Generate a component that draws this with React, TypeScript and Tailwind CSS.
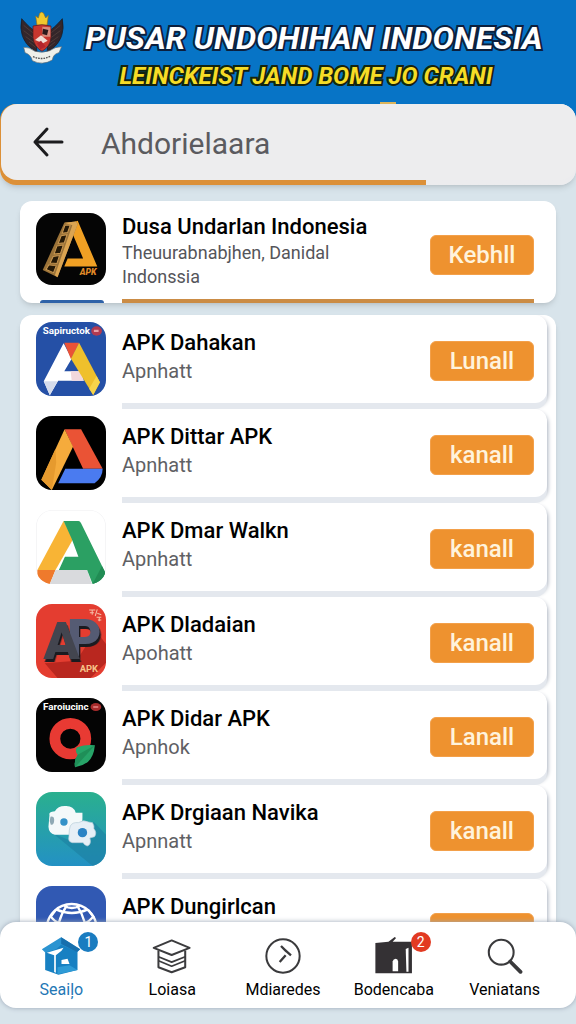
import { useState } from "react";
import type { ReactNode } from "react";

type AppItem = {
  id: number;
  name: string;
  desc: string;
  action?: string;
  icon: ReactNode;
};

const Tile = ({ children, bg }: { children: ReactNode; bg: string }) => (
  <svg viewBox="0 0 208 222" preserveAspectRatio="none" className="h-full w-full rounded-2xl" aria-hidden="true">
    <rect width="208" height="222" fill={bg} />
    {children}
  </svg>
);

const TowerIcon = () => (
  <Tile bg="#050505">
    <path d="M108 30L124 24L182 165H84L94 140H140L106 58Z" fill="#f0a024" />
    <path d="M84 30L118 26L124 34L64 198L20 176Z" fill="#9a7238" />
    <path d="M84 30L118 26L124 34L64 198L56 192L108 38Z" fill="#dba451" />
    <g fill="#241806" stroke="#c89650" strokeWidth="3">
      <path d="M86 38L102 37L94 60L78 62Z" />
      <path d="M75 70L92 67L84 92L66 94Z" />
      <path d="M62 102L81 99L73 124L54 126Z" />
      <path d="M51 134L70 131L62 156L42 154Z" />
      <path d="M38 160L60 163L52 184L30 174Z" />
    </g>
    <text x="130" y="192" fontSize="26" fontWeight="900" fontStyle="italic" fill="#e08a28" fontFamily="Roboto, sans-serif">APK</text>
  </Tile>
);

const BlueLetterIcon = () => (
  <Tile bg="#2550a6">
    <path d="M82 64L106 110L84 148H132L142 176H66L41 220L23 178Z" fill="#fff" />
    <path d="M23 178L64 178L41 220Z" fill="#d5dcec" />
    <path d="M103 148H132L142 176H106Z" fill="#f2d8dc" />
    <path d="M84 62H128L104 112Z" fill="#ea5236" />
    <path d="M128 62L190 181L170 219L104 110Z" fill="#efc02c" />
    <path d="M170 219L190 181L180 162L158 200Z" fill="#f7d44a" />
    <text x="20" y="36" fontSize="29" fontWeight="700" fill="#fff" fontFamily="Roboto, sans-serif">Sapiructok</text>
    <ellipse cx="180" cy="27" rx="16" ry="14" fill="#b23a50" />
    <path d="M172 23h14v7h-14z" fill="#e8a0a8" />
  </Tile>
);

const TriangleIcon = () => (
  <Tile bg="#000">
    <path d="M85 40H134L198 158H140L109 92Z" fill="#ea5335" />
    <path d="M85 40L110 92L47 222L16 191Z" fill="#f5ab3c" />
    <path d="M58 98L60 140L47 222L16 191Z" fill="#e69a2e" />
    <path d="M87 158H198Q198 184 174 202H66Z" fill="#4a7bf0" />
  </Tile>
);

const GreenLetterIcon = () => (
  <Tile bg="#fff">
    <rect x="1" y="1" width="206" height="220" rx="46" fill="none" stroke="#f3f3f5" strokeWidth="3" />
    <path d="M82 33L110 88L58 180H4Z" fill="#f8b435" />
    <path d="M4 180H58L41 222H22Q2 212 4 180Z" fill="#ef7a2c" />
    <path d="M58 180H152L166 222H41Z" fill="#d9dadd" />
    <path d="M82 33H126Q131 33 134 40L205 186Q208 208 184 222H168L152 180H68L86 140H126L106 86Z" fill="#2ba063" />
    <path d="M196 168L205 186Q208 208 184 222H168Z" fill="#218c54" />
  </Tile>
);

const MonogramIcon = () => (
  <Tile bg="#e43d30">
    <path d="M26 178L64 222H162L208 176V120L178 80L120 170Z" fill="#b9271f" />
    <g
      fontFamily="Roboto, sans-serif"
      fontWeight="900"
      fontSize="158"
      className="[filter:drop-shadow(4px_9px_0_#1b1b20)]"
    >
      <text x="92" y="156" fill="#555b73">P</text>
      <text x="22" y="164" fill="#43454f">A</text>
    </g>
    <text x="130" y="204" fontSize="28" fontWeight="700" fill="#f6c489" fontFamily="Roboto, sans-serif">APK</text>
    <path d="M158 18h18M160 26h12M167 18v14M182 16l-6 20M182 28l12 4M180 40h14M184 48h10M188 40v12" stroke="#f4c0a8" strokeWidth="3" fill="none" />
  </Tile>
);

const RingIcon = () => (
  <Tile bg="#040404">
    <circle cx="102" cy="122" r="46" fill="none" stroke="#e83a33" strokeWidth="32" />
    <path d="M122 148Q150 138 175 142Q172 176 154 192Q138 204 116 208Q112 186 124 170Q114 158 122 148Z" fill="#27a468" />
    <path d="M175 142L116 208Q112 186 124 170Z" fill="#1f8f58" />
    <text x="21" y="37" fontSize="29" fontWeight="700" fill="#fff" fontFamily="Roboto, sans-serif">Faroiucinc</text>
    <ellipse cx="178" cy="27" rx="16" ry="12" fill="#a82c2c" />
    <path d="M170 24h15v6h-15z" fill="#d87070" />
  </Tile>
);

const CloudIcon = () => (
  <Tile bg="url(#cloudTile)">
    <defs>
      <linearGradient id="cloudTile" x1="0" y1="0" x2="0" y2="1">
        <stop offset="0" stopColor="#2ab08e" />
        <stop offset="1" stopColor="#2391c4" />
      </linearGradient>
    </defs>
    <path d="M50 124L168 222H190Q208 218 208 196V128L172 90L120 154Z" fill="#1c7fa0" opacity=".6" />
    <path d="M40 70Q36 60 56 58Q66 40 90 42Q112 42 118 62H138V76Q138 122 118 128H56Q38 124 37 104Z" fill="#f4f9fa" />
    <path d="M43 74Q54 72 54 84Q54 100 44 98Q38 86 43 74Z" fill="#8fa9b4" />
    <circle cx="83" cy="90" r="11" fill="#3592c8" />
    <path d="M102 102Q108 90 126 92Q140 82 156 90L168 92Q174 102 172 110Q182 122 174 134L160 138Q166 158 152 162Q142 158 140 152H108Q94 150 98 132Q98 112 102 102Z" fill="#e6eff6" stroke="#b6ccd8" strokeWidth="2" />
    <circle cx="138" cy="122" r="14" fill="#2b83c4" />
  </Tile>
);

const GlobeIcon = () => (
  <Tile bg="#3159b3">
    <g fill="none" stroke="#fff" strokeWidth="7">
      <circle cx="106" cy="128" r="74" />
      <path d="M60 70Q106 92 154 70M84 60Q106 72 130 60" />
      <path d="M92 58Q66 96 64 140M122 58Q146 96 150 140M60 70L44 92Q58 108 66 110M154 70L170 92Q156 108 148 110" />
    </g>
  </Tile>
);

const apps: AppItem[] = [
  { id: 1, name: "APK Dahakan", desc: "Apnhatt", action: "Lunall", icon: <BlueLetterIcon /> },
  { id: 2, name: "APK Dittar APK", desc: "Apnhatt", action: "kanall", icon: <TriangleIcon /> },
  { id: 3, name: "APK Dmar Walkn", desc: "Apnhatt", action: "kanall", icon: <GreenLetterIcon /> },
  { id: 4, name: "APK Dladaian", desc: "Apohatt", action: "kanall", icon: <MonogramIcon /> },
  { id: 5, name: "APK Didar APK", desc: "Apnhok", action: "Lanall", icon: <RingIcon /> },
  { id: 6, name: "APK Drgiaan Navika", desc: "Apnnatt", action: "kanall", icon: <CloudIcon /> },
  { id: 7, name: "APK Dungirlcan", desc: "", icon: <GlobeIcon /> },
];

const Emblem = () => (
  <svg viewBox="0 0 130 156" className="h-[52px] w-[44px] shrink-0" aria-hidden="true">
    <path d="M4 20Q30 50 44 56L50 122L38 114Q-8 80 4 20Z" fill="#33262a" stroke="#17181f" strokeWidth="2" />
    <path d="M126 20Q100 50 86 56L80 122L92 114Q138 80 126 20Z" fill="#33262a" stroke="#17181f" strokeWidth="2" />
    <path d="M10 40L42 66M10 56L42 80M16 74L44 94M26 90L46 106M120 40L88 66M120 56L88 80M114 74L86 94M104 90L84 106" stroke="#5c463f" strokeWidth="2" />
    <path d="M46 12L54 18L58 4L64 0L70 4L76 18L84 10L80 40H50Z" fill="#f0c92e" stroke="#94711c" strokeWidth="2" />
    <path d="M38 42Q64 34 92 42V76Q90 104 65 118Q40 104 38 76Z" fill="#c7372f" stroke="#4c1a1c" strokeWidth="2" />
    <path d="M66 44L90 46V74H66Z" fill="#d98b7c" />
    <path d="M68 50L84 54L80 70L66 66Z" fill="#2b1a1c" />
    <path d="M44 84L62 70L82 86L68 94Z" fill="#f1ddd6" />
    <path d="M50 94L62 86L76 104L60 112Z" fill="#b3242c" />
    <path d="M10 106Q26 104 44 118Q66 124 88 116Q104 104 124 104L116 122Q98 126 96 144Q66 162 36 146Q32 128 14 122Z" fill="#eef0ea" stroke="#5c6a73" strokeWidth="2" />
    <path d="M38 134Q66 146 92 132" stroke="#555" strokeWidth="4" strokeDasharray="5 3" fill="none" />
  </svg>
);

const HomeIcon = () => (
  <svg viewBox="120 196 125 120" className="h-10 w-[42px]" aria-hidden="true">
    <path d="M135 240L183 208L232 240V298L175 312L135 298Z" fill="#1780c2" />
    <path d="M125 236L183 200L240 236L232 244L183 222L168 236L136 246Z" fill="#2b94d1" />
    <path d="M183 200L240 236L230 244L183 220Z" fill="#176fad" />
    <path d="M140 246L190 231L184 240L167 254V306L162 304V254Z" fill="#fff" />
    <path d="M184 268L202 264L208 280H184Z" fill="#fff" />
    <path d="M172 311V290L208 284L232 298Z" fill="#2e9bd6" />
  </svg>
);

const StackIcon = () => (
  <svg viewBox="446 200 124 110" className="h-10 w-[42px]" fill="none" stroke="#3c3c3e" strokeWidth="6" strokeLinejoin="round" aria-hidden="true">
    <path d="M507 209L560 231L507 252L454 231Z" />
    <path d="M468 239V288L507 303L547 288V239" />
    <path d="M468 257L507 273L547 257M468 269L507 285L547 269" strokeWidth="5" />
  </svg>
);

const DialIcon = () => (
  <svg viewBox="0 0 120 120" className="h-10 w-10" fill="none" stroke="#3a3a3c" strokeWidth="6" aria-hidden="true">
    <circle cx="60" cy="60" r="50" />
    <path d="M54 30L70 46M68 44L84 58M68 58L50 78" strokeWidth="7" />
  </svg>
);

const StoreIcon = () => (
  <svg viewBox="256 188 120 116" className="h-10 w-[42px]" aria-hidden="true">
    <path d="M262 208L300 205L318 191L322 194L312 205H368V296H262Z" fill="#343134" />
    <path d="M312 290V262Q314 254 321 254Q327 254 328 262V290Z" fill="#fff" />
    <path d="M350 226L358 222V292H352Z" fill="#fff" />
  </svg>
);

const LoupeIcon = () => (
  <svg viewBox="592 196 116 116" className="h-10 w-10" fill="none" stroke="#3a3a3c" aria-hidden="true">
    <circle cx="639" cy="243" r="36" strokeWidth="6" />
    <path d="M665 270L695 300" strokeWidth="11" strokeLinecap="round" />
  </svg>
);

const tabs = [
  { label: "Seaiļo", icon: <HomeIcon />, badge: "1", badgeColor: "bg-[#1a7cc0]" },
  { label: "Loiasa", icon: <StackIcon /> },
  { label: "Mdiaredes", icon: <DialIcon /> },
  { label: "Bodencaba", icon: <StoreIcon />, badge: "2", badgeColor: "bg-[#e23a22]" },
  { label: "Veniatans", icon: <LoupeIcon /> },
];

const ActionButton = ({ label, children }: { label: string; children?: ReactNode }) => (
  <button
    type="button"
    aria-label={label}
    className="block h-10 w-26 shrink-0 rounded-md border border-[#f3a04a] bg-[#ee922f] text-2xl font-medium text-[#fff3dc]"
  >
    {children}
  </button>
);

export default function App() {
  const [query, setQuery] = useState("Ahdorielaara");
  const [active, setActive] = useState("Seaiļo");

  return (
    <div className="flex h-screen flex-col overflow-hidden bg-[#d8e4eb] font-['Roboto',sans-serif] text-black">
      {/* Banner */}
      <header className="flex shrink-0 items-start bg-[#0774c6] pt-3 pr-3 pb-7 pl-5">
        <Emblem />
        <div className="flex-1 text-center font-bold whitespace-nowrap italic">
          <h1 className="pt-1 text-[32px] leading-11 text-white [-webkit-text-stroke:4px_#0b1f3d] [paint-order:stroke_fill]">
            PUSAR UNDOHIHAN INDONESIA
          </h1>
          <p className="pr-4 text-2xl leading-8 text-[#f6dc26] [-webkit-text-stroke:4px_#14240f] [paint-order:stroke_fill]">
            LEINCKEIST JAND BOME JO CRANI
          </p>
        </div>
      </header>

      {/* Search */}
      <div className="relative z-10 -mt-4 shrink-0 rounded-2xl bg-linear-to-r from-[#dc9038] from-74% to-[#ececee] to-74% pb-[5px] pl-px shadow-md">
        <span className="absolute -top-0.5 left-[66%] h-0.5 w-4 bg-[#dcb45a]" />
        <form className="flex h-[76px] items-center rounded-2xl bg-[#ededee] pl-7" onSubmit={(e) => e.preventDefault()}>
          <button type="button" aria-label="Kembali" className="mr-7">
            <svg viewBox="0 0 40 40" className="size-10" fill="none" stroke="#1c1c1e" strokeWidth="3" strokeLinecap="round" strokeLinejoin="round" aria-hidden="true">
              <path d="M33 20H6M18 7L6 20L18 33" />
            </svg>
          </button>
          <input
            type="text"
            aria-label="Cari"
            className="min-w-0 flex-1 bg-transparent pt-1 pl-1 text-3xl text-[#5b5b5f] outline-none"
            value={query}
            onChange={(e) => setQuery(e.target.value)}
          />
        </form>
      </div>

      <main className="flex min-h-0 flex-1 flex-col gap-3 overflow-hidden px-5 pt-4">
        {/* Featured app */}
        <section className="relative shrink-0 overflow-hidden rounded-xl bg-white shadow-md">
          <div className="flex items-start pt-3 pr-[22px] pb-3.5 pl-4">
            <div className="h-[72px] w-[70px] shrink-0">
              <TowerIcon />
            </div>
            <div className="ml-4 min-w-0 flex-1">
              <h2 className="text-[22px] leading-7 font-medium whitespace-nowrap">Dusa Undarlan Indonesia</h2>
              <p className="max-w-60 text-lg leading-6 text-[#55555a]">Theuurabnabjhen, Danidal Indonssia</p>
            </div>
            <div className="pt-[22px]">
              <ActionButton label="Kebhll">Kebhll</ActionButton>
            </div>
          </div>
          <div className="absolute bottom-0 left-5 h-[3px] w-16 rounded-t bg-[#2e62a8]" />
          <div className="absolute right-[22px] bottom-0 left-[102px] h-1 bg-[#cb8c45]" />
        </section>

        {/* App list */}
        <ul className="shrink-0 space-y-1.5 rounded-t-xl bg-white shadow-md">
          {apps.map((app) => (
            <li key={app.id} className="flex h-22 items-center pr-[9px] pl-4">
              <div className="h-[74px] w-[70px] shrink-0">{app.icon}</div>
              <div className="ml-4 flex min-w-0 flex-1 items-center self-stretch rounded-r-xl bg-white shadow-[0_6px_0_#e4e8ee,1px_3px_4px_#a9b1be] [clip-path:inset(0_-9px_-6px_0)]">
                <div className="min-w-0 flex-1 pb-1">
                  <h2 className="text-[22px] leading-7 font-medium whitespace-nowrap">{app.name}</h2>
                  <p className="min-h-7 text-xl leading-7 text-[#606064]">{app.desc}</p>
                </div>
                <div className={app.action ? "pt-1 pr-[13px]" : "self-end pr-[13px] pb-3.5"}>
                  <ActionButton label={app.action ?? app.name}>{app.action}</ActionButton>
                </div>
              </div>
            </li>
          ))}
        </ul>
      </main>

      {/* Bottom tabs */}
      <nav className="relative z-10 mb-4 flex shrink-0 rounded-2xl bg-white pt-3.5 pr-4 pb-1.5 pl-1.5 shadow-[0_0_5px_#9aa5b5]">
        {tabs.map((tab) => (
          <a
            key={tab.label}
            href="#"
            className={`flex min-w-0 flex-1 flex-col items-center ${active === tab.label ? "text-[#2377b5]" : "text-black"}`}
            onClick={() => setActive(tab.label)}
          >
            <span className="relative">
              {tab.icon}
              {tab.badge && (
                <span className={`absolute -top-1 -right-4 flex size-5 items-center justify-center rounded-full text-sm text-white ${tab.badgeColor}`}>
                  {tab.badge}
                </span>
              )}
            </span>
            <span className="pt-0.5 text-base leading-6">{tab.label}</span>
          </a>
        ))}
      </nav>
    </div>
  );
}
